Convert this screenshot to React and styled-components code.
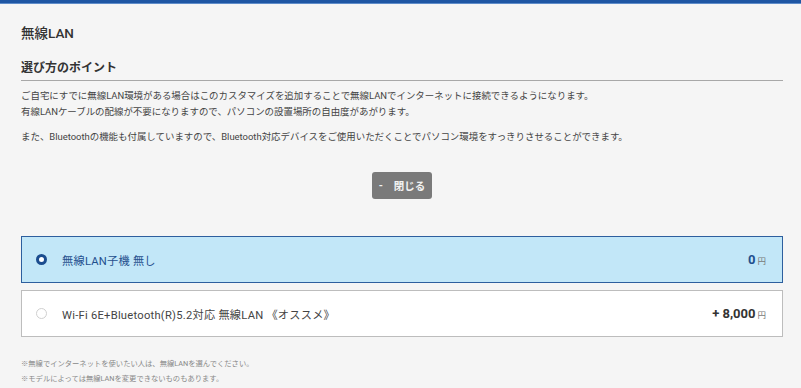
import React, { useState } from 'react';
import styled, { createGlobalStyle } from 'styled-components';

const GlobalStyle = createGlobalStyle`
  html, body {
    margin: 0;
    background: #f5f5f5;
  }
  body {
    font-family: Roboto, "Noto Sans CJK JP", sans-serif;
    color: #333;
  }
`;

const Panel = styled.section`
  border-top: 3px solid #1f56a3;
  box-shadow: inset 0 1px 0 #5f8cc9;
  padding: 21px 18px 0 21px;
  min-height: 388px;
  box-sizing: border-box;
`;

const Title = styled.h2`
  margin: 0;
  font-size: 13.5px;
  line-height: 18px;
  font-weight: 500;
  color: #333;
`;

const SubTitle = styled.h3`
  margin: 17px 0 0;
  padding-bottom: 3px;
  font-size: 12px;
  line-height: 18px;
  font-weight: 700;
  color: #333;
  border-bottom: 1px solid #a8a8a8;
`;

const Text = styled.p`
  margin: ${p => p.$top || 0}px 0 0;
  font-size: 9.45px;
  line-height: 16px;
  color: #444;
`;

const ButtonRow = styled.div`
  display: flex;
  justify-content: center;
  margin-top: 27px;
`;

const CloseButton = styled.button`
  display: flex;
  align-items: center;
  gap: 11px;
  height: 27px;
  padding: 0 7px 0 7px;
  border: none;
  border-radius: 3px;
  background: #7a7a7a;
  color: #f2f2f2;
  font-family: inherit;
  font-size: 10.5px;
  font-weight: 700;
  cursor: pointer;
`;

const Options = styled.div`
  display: flex;
  flex-direction: column;
  gap: 7px;
  margin-top: 37px;
`;

const Option = styled.label`
  display: flex;
  align-items: center;
  height: 47px;
  box-sizing: border-box;
  padding: 0 16px 0 14px;
  background: ${p => (p.$active ? '#c2e7f8' : '#fff')};
  border: 1px solid ${p => (p.$active ? '#2d5f9e' : '#bdbdbd')};
  color: ${p => (p.$active ? '#1f4f8e' : '#444')};
  cursor: pointer;
`;

const Radio = styled.span`
  width: 11px;
  height: 11px;
  box-sizing: border-box;
  border-radius: 50%;
  flex-shrink: 0;
  background: #fff;
  border: ${p => (p.$checked ? '3.5px solid #1b4d8f' : '1px solid #d0d0d0')};
`;

const Label = styled.span`
  flex: 1;
  margin-left: 15px;
  font-size: 11.2px;
  letter-spacing: 0.25px;
`;

const Price = styled.span`
  font-size: 13px;
  font-weight: 700;
  color: ${p => (p.$active ? '#1f4f8e' : '#333')};
`;

const Yen = styled.span`
  margin-left: 2px;
  font-size: 8.5px;
  font-weight: 400;
  color: #777;
`;

const Notes = styled.div`
  margin-top: 19px;
  font-size: 7.3px;
  line-height: 15px;
  color: #888;
`;

const items = [
  { id: 'none', label: '無線LAN子機 無し', price: '0' },
  { id: 'wifi6e', label: 'Wi-Fi 6E+Bluetooth(R)5.2対応 無線LAN 《オススメ》', price: '+ 8,000' },
];

export default function App() {
  const [selected, setSelected] = useState('none');

  return (
    <>
      <GlobalStyle />
      <Panel>
        <Title>無線LAN</Title>
        <SubTitle>選び方のポイント</SubTitle>
        <Text $top={7}>
          ご自宅にすでに無線LAN環境がある場合はこのカスタマイズを追加することで無線LANでインターネットに接続できるようになります。
          <br />
          有線LANケーブルの配線が不要になりますので、パソコンの設置場所の自由度があがります。
        </Text>
        <Text $top={9}>
          また、Bluetoothの機能も付属していますので、Bluetooth対応デバイスをご使用いただくことでパソコン環境をすっきりさせることができます。
        </Text>
        <ButtonRow>
          <CloseButton>
            <span>-</span>
            <span>閉じる</span>
          </CloseButton>
        </ButtonRow>
        <Options>
          {items.map(item => {
            const active = selected === item.id;
            return (
              <Option key={item.id} $active={active} onClick={() => setSelected(item.id)}>
                <Radio $checked={active} />
                <Label>{item.label}</Label>
                <Price $active={active}>
                  {item.price}
                  <Yen>円</Yen>
                </Price>
              </Option>
            );
          })}
        </Options>
        <Notes>
          <div>※無線でインターネットを使いたい人は、無線LANを選んでください。</div>
          <div>※モデルによっては無線LANを変更できないものもあります。</div>
        </Notes>
      </Panel>
    </>
  );
}
